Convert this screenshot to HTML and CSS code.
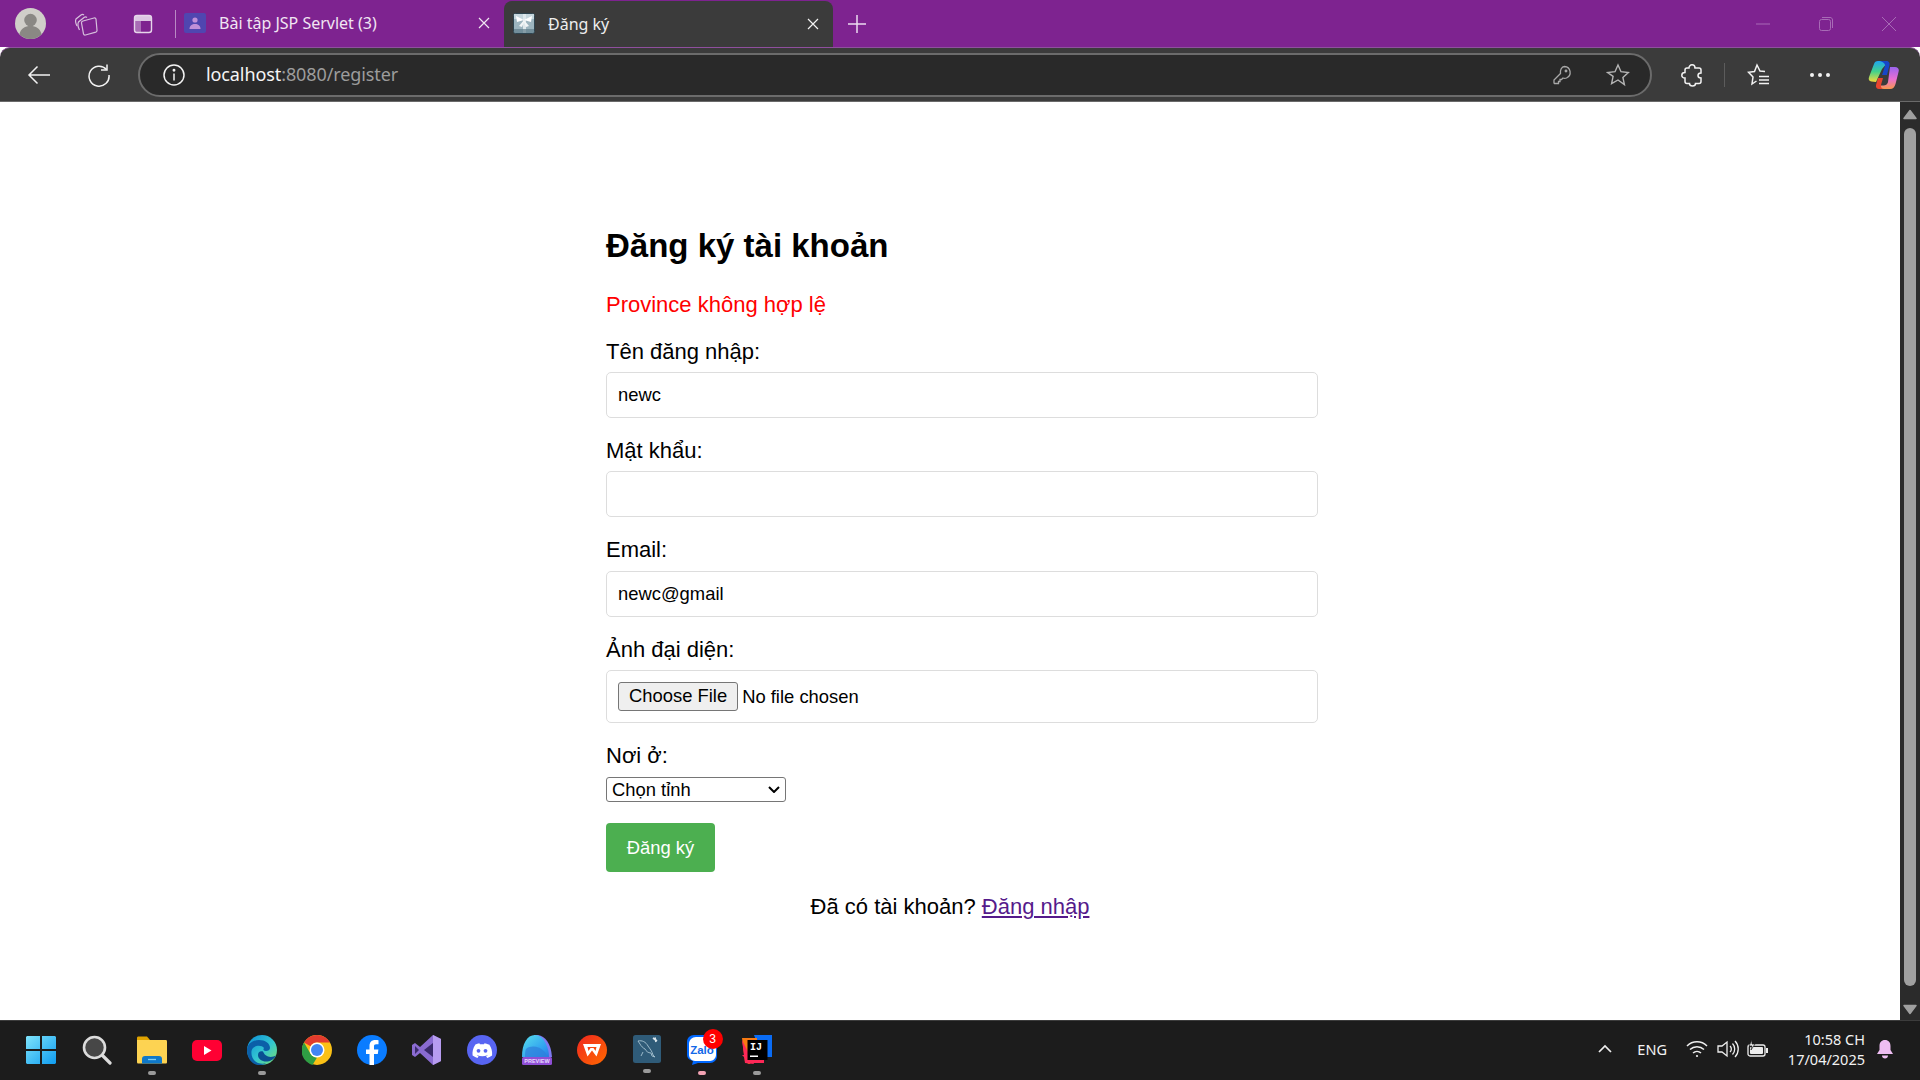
FILE: index.html
```html
<!DOCTYPE html>
<html lang="vi">

<head>
    <meta charset="UTF-8">
    <meta name="viewport" content="width=device-width, initial-scale=1.0">
    <title>Đăng ký</title>
    <link rel="stylesheet" href="styles.css">
</head>

<body>
    <!-- tab strip -->
    <div class="tab-strip">
        <span class="strip-btn avatar-btn">
            <svg width="31" height="31" viewBox="0 0 32 32"><circle cx="16" cy="16" r="16" fill="#d0cec9"/><circle cx="16" cy="12.500" r="6.500" fill="#8a8884"/><path d="M4.500 27c1.500-6 6-8.500 11.500-8.500S26 21 27.500 27A15.500 15.500 0 0 1 16 32 15.500 15.500 0 0 1 4.500 27z" fill="#8a8884"/></svg>
        </span>
        <span class="strip-btn collections-btn">
            <svg width="24" height="24" viewBox="0 0 24 24" fill="none" stroke="#d6bfdc" stroke-width="1.200"><path d="M3 14c-1.500-3-2-5-1-7l5-4c1-.7 2-.7 3 0"/><path d="M5.500 18C4 15 3.500 12 4.500 10L10 5.500c1-.7 2-.7 3 0"/><path d="M9 9l11-3c1-.2 1.800.2 2 1.200l1 11c.1 1-.4 1.600-1.200 1.900L11.500 23c-1 .2-1.800-.3-2-1.200L7.500 11c-.1-1 .5-1.700 1.500-2z"/></svg>
        </span>
        <span class="strip-btn vtabs-btn">
            <svg width="22" height="22" viewBox="0 0 22 22"><path d="M3 3h16v5H3z" fill="#dcc6e3"/><path d="M3 8h6v11H3z" fill="#dcc6e3" opacity=".45"/><rect x="2.500" y="2.500" width="17" height="17" rx="2.500" fill="none" stroke="#e6d5ea" stroke-width="1.400"/></svg>
        </span>
        <span class="strip-sep"></span>
        <div class="tab">
            <svg class="tab-icon" width="22" height="20" viewBox="0 0 22 20"><rect width="22" height="20" rx="2" fill="#5046b0"/><circle cx="11" cy="7" r="2.600" fill="#c08fd8"/><path d="M5.500 16c0-3.500 2.500-5 5.500-5s5.500 1.500 5.500 5z" fill="#c08fd8"/></svg>
            <span class="tab-title">Bài tập JSP Servlet (3)</span>
            <svg class="tab-close" width="12" height="12" viewBox="0 0 12 12"><path d="M1 1l10 10M11 1L1 11" stroke="#f0e6f2" stroke-width="1.200"/></svg>
        </div>
        <div class="tab tab-active">
            <svg class="tab-icon" width="22" height="21" viewBox="0 0 22 21"><rect x=".5" y=".5" width="21" height="20" rx="2" fill="#9db5bf" stroke="#2f4550"/><path d="M1 1h20v5H1z" fill="#c6d6dc"/><path d="M10 1h3v19h-3z" fill="#dfe8eb"/><path d="M11 7L3 3l1 6zM11 7l8-4-1 6z" fill="#fff"/><path d="M11 7l-5 6 3 1 2-5 2 5 3-1z" fill="#f3f6f7"/><path d="M1 16h20v4H1z" fill="#5f7d8a" opacity=".7"/></svg>
            <span class="tab-title">Đăng ký</span>
            <svg class="tab-close" width="12" height="12" viewBox="0 0 12 12"><path d="M1 1l10 10M11 1L1 11" stroke="#f2f2f2" stroke-width="1.200"/></svg>
        </div>
        <span class="new-tab">
            <svg width="20" height="20" viewBox="0 0 20 20"><path d="M10 1v18M1 10h18" stroke="#ecdcef" stroke-width="1.500"/></svg>
        </span>
        <div class="win-controls">
            <svg width="16" height="16" viewBox="0 0 16 16"><path d="M1 8h14" stroke="#a86bb6" stroke-width="1"/></svg>
            <svg width="16" height="16" viewBox="0 0 16 16" fill="none" stroke="#a86bb6"><rect x="1.500" y="3.500" width="11" height="11" rx="2"/><path d="M4 1.500h8c1.500 0 2.500 1 2.500 2.500v8"/></svg>
            <svg width="16" height="16" viewBox="0 0 16 16"><path d="M1 1l14 14M15 1L1 15" stroke="#a86bb6" stroke-width="1"/></svg>
        </div>
    </div>

    <!-- toolbar -->
    <div class="toolbar">
        <span class="tool-btn back-btn">
            <svg width="24" height="24" viewBox="0 0 24 24" fill="none" stroke="#f2f2f2" stroke-width="1.500"><path d="M23 12H2.500M10.500 3.500L2 12l8.500 8.500"/></svg>
        </span>
        <span class="tool-btn reload-btn">
            <svg width="24" height="24" viewBox="0 0 24 24" fill="none" stroke="#f2f2f2" stroke-width="1.500"><path d="M19.500 6.500A10 10 0 1 0 22 12"/><path d="M20 1.500v5.500h-6"/></svg>
        </span>
        <div class="address-bar">
            <svg class="info-icon" width="24" height="24" viewBox="0 0 24 24" fill="none" stroke="#f2f2f2" stroke-width="1.500"><circle cx="12" cy="12" r="10"/><path d="M12 10.500v7"/><circle cx="12" cy="7.300" r=".7" fill="#f2f2f2"/></svg>
            <span class="url"><span class="url-host">localhost</span>:8080/register</span>
            <svg class="key-icon" width="22" height="22" viewBox="0 0 22 22" fill="none" stroke="#a9a9a9" stroke-width="1.300"><path d="M13.500 2.500a6 6 0 0 1 2 11.500c-1.500.5-2.500.4-3.500 0l-1.500 1.500H9v2H7.500V19.500H3.500L3 19v-3l6.500-6.500c-.5-3.500 1-7 4-7z"/><circle cx="15" cy="7" r=".8" fill="#a9a9a9"/></svg>
            <svg class="star-icon" width="24" height="24" viewBox="0 0 24 24" fill="none" stroke="#b5b5b5" stroke-width="1.400"><path d="M12 2l3 6.700 7.300.8-5.400 4.900 1.500 7.200L12 17l-6.400 3.600 1.500-7.200L1.700 9.500 9 8.700z"/></svg>
        </div>
        <span class="tool-btn ext-btn">
            <svg width="24" height="24" viewBox="0 0 24 24" fill="none" stroke="#f2f2f2" stroke-width="1.500"><path d="M9 5c0-2 1.300-3.200 3-3.200S15 3 15 5h4c1 0 2 1 2 2v3c-2 0-3 1-3 2.500S19 15 21 15v3.500c0 1-1 2-2 2h-3.500c0 1.500-1.500 2.500-3 2.500s-3-1-3-2.500H7c-1 0-2-1-2-2V15c-2 0-3.200-1.200-3.200-2.800S3 9.500 5 9.500V7c0-1 1-2 2-2z"/></svg>
        </span>
        <span class="tool-sep"></span>
        <span class="tool-btn fav-btn">
            <svg width="24" height="24" viewBox="0 0 24 24" fill="none" stroke="#f2f2f2" stroke-width="1.500"><path d="M18 8.500L13 8 10 2 7.500 8.500l-6 .8L6 14l-1 7 4.500-3"/><path d="M12 13.500h10M12 17h10M12 20.500h10" stroke-width="1.700"/></svg>
        </span>
        <span class="tool-btn more-btn">
            <span class="more-dot"></span><span class="more-dot"></span><span class="more-dot"></span>
        </span>
        <span class="tool-btn copilot-btn">
            <svg width="31" height="28" viewBox="0 0 31 28">
                <defs>
                    <linearGradient id="cop1" x1="0" y1="0" x2="0" y2="1"><stop offset="0" stop-color="#1fa5f2"/><stop offset=".5" stop-color="#43d18b"/><stop offset="1" stop-color="#f7d93a"/></linearGradient>
                    <linearGradient id="cop2" x1="0" y1="0" x2="0" y2="1"><stop offset="0" stop-color="#9a64ee"/><stop offset=".55" stop-color="#ea6fd2"/><stop offset="1" stop-color="#f8984e"/></linearGradient>
                </defs>
                <path d="M14 8l6-7c-1-.8-2-1-3-1h-7C8 0 6.500 1 6 3L1 16c-.8 2.500 0 4 2.500 4.500L8 21z" fill="url(#cop1)"/>
                <path d="M12 0h6c2.500 0 4 1.500 3.500 4L19 14h-5l3-9c.5-2-1.500-4-5-5z" fill="#1846c8"/>
                <path d="M10 17h5l-2 7c-.4 1.500 1 3 3.500 4H11c-2 0-3.500-1.500-3-4z" fill="#e8442f"/>
                <path d="M22 6h5c3 0 4.500 2 3.500 5l-3 12c-.8 3-2.500 5-5.500 5h-6c-2 0-3.500-1.500-3-3.500 5 .5 6.500-1.500 7-3.500z" fill="url(#cop2)"/>
            </svg>
        </span>
    </div>

    <!-- page -->
    <div class="viewport">
        <main class="page">
            <div class="register-box">
                <h2 class="register-title">Đăng ký tài khoản</h2>
                <p class="error-msg">Province không hợp lệ</p>
                <form class="register-form">
                    <label class="form-label">Tên đăng nhập:</label>
                    <input class="form-input" type="text" value="newc">
                    <label class="form-label">Mật khẩu:</label>
                    <input class="form-input" type="password">
                    <label class="form-label">Email:</label>
                    <input class="form-input" type="text" value="newc@gmail">
                    <label class="form-label">Ảnh đại diện:</label>
                    <input class="form-input form-file" type="file">
                    <label class="form-label">Nơi ở:</label>
                    <select class="form-select">
                        <option>Chọn tỉnh</option>
                    </select>
                    <button class="submit-btn" type="button">Đăng ký</button>
                </form>
                <p class="login-line">Đã có tài khoản? <a href="#" class="login-link">Đăng nhập</a></p>
            </div>
        </main>
        <div class="scrollbar">
            <svg class="scroll-arrow" width="14" height="11" viewBox="0 0 14 11"><path d="M7 1.500L13 9.500H1z" fill="#a0a0a0" stroke="#a0a0a0" stroke-width="1.500" stroke-linejoin="round"/></svg>
            <span class="scroll-thumb"></span>
            <svg class="scroll-arrow" width="14" height="11" viewBox="0 0 14 11"><path d="M7 9.500L13 1.500H1z" fill="#a0a0a0" stroke="#a0a0a0" stroke-width="1.500" stroke-linejoin="round"/></svg>
        </div>
    </div>

    <!-- taskbar -->
    <div class="taskbar">
        <div class="task-icons">
            <div class="task-item win-item">
                <svg width="30" height="30" viewBox="0 0 30 30">
                    <defs><linearGradient id="win" x1="0" y1="0" x2="1" y2="1"><stop offset="0" stop-color="#7fe4fb"/><stop offset="1" stop-color="#0f9cf0"/></linearGradient></defs>
                    <path d="M1 1h13v13H0V2zM16 1h13l1 1v12H16zM0 16h14v13H1l-1-1zM16 16h14v12l-1 1H16z" fill="url(#win)"/>
                </svg>
            </div>
            <div class="task-item">
                <svg width="30" height="30" viewBox="0 0 30 30"><circle cx="12.500" cy="12.500" r="10.500" fill="#474747" stroke="#dcdcdc" stroke-width="2.600"/><path d="M20.500 20.500l7.500 7.500" stroke="#dcdcdc" stroke-width="3.200" stroke-linecap="round"/></svg>
            </div>
            <div class="task-item has-dot">
                <svg width="30" height="30" viewBox="0 0 30 30"><path d="M0 3c0-1 .5-1.500 1.500-1.500H10L13 5H0z" fill="#e0a300"/><path d="M0 5h28.500c1 0 1.500.5 1.500 1.500V27c0 1-.5 1.500-1.500 1.500h-27C.5 28.500 0 28 0 27z" fill="#fdd352"/><path d="M5 24c0-2 1-3 3-3h14c2 0 3 1 3 3v4.500H5z" fill="#0f78c9"/><path d="M11 24.500h8" stroke="#7fd0f5" stroke-width="1.300"/></svg>
                <span class="task-dot"></span>
            </div>
            <div class="task-item">
                <svg width="30" height="30" viewBox="0 0 30 30"><rect x="0" y="5" width="30" height="21" rx="5" fill="#ff0033"/><path d="M12 11l7.500 4.500L12 20z" fill="#fff"/></svg>
            </div>
            <div class="task-item has-dot">
                <svg width="30" height="30" viewBox="0 0 30 30">
                    <defs>
                        <linearGradient id="edge1" x1="0" y1="0" x2="1" y2="1"><stop offset="0" stop-color="#0c8ed8"/><stop offset=".55" stop-color="#33c6d0"/><stop offset="1" stop-color="#7ee26a"/></linearGradient>
                    </defs>
                    <circle cx="15" cy="15" r="15" fill="url(#edge1)"/>
                    <path d="M0 15C0 9 6 5 12 5c6 0 11 3 11 8 0 2-2 3-4 3-3 0-3-2-2-3-2-3-8-3-11 0-3 3-2 12 5 15 3 1 6 1 8 0-2 2-5 2-7 2C5 30 0 23 0 15z" fill="#0b5fa8"/>
                    <path d="M11 20c0 4 4 6.500 8 6.500 4 0 8-2 10-6-2 1-5 2-8 1-3-1-4-3-5-5-3-1-5 1-5 3.500z" fill="#0a4f92"/>
                </svg>
                <span class="task-dot"></span>
            </div>
            <div class="task-item">
                <svg width="30" height="30" viewBox="0 0 30 30"><circle cx="15" cy="15" r="15" fill="#fbc116"/><path d="M15 0a15 15 0 0 1 13 7.500H15A7.500 7.500 0 0 0 8.500 11.200L2 7.500A15 15 0 0 1 15 0z" fill="#e33b2e"/><path d="M2 7.500l6.500 11.300A7.500 7.500 0 0 0 15 22.500L10.500 30A15 15 0 0 1 2 7.500z" fill="#2f9e44"/><circle cx="15" cy="15" r="7.500" fill="#fff"/><circle cx="15" cy="15" r="6" fill="#4285f4"/></svg>
            </div>
            <div class="task-item">
                <svg width="30" height="30" viewBox="0 0 30 30"><circle cx="15" cy="15" r="15" fill="#0a7cff"/><path d="M12.500 30V19H9v-4.500h3.500V11c0-4 2.300-6 5.700-6 1.600 0 3 .1 3.300.2v4h-2.300c-1.800 0-2.200.9-2.200 2.100v3.200h4.400l-.6 4.500h-3.800v11z" fill="#fff"/></svg>
            </div>
            <div class="task-item">
                <svg width="30" height="30" viewBox="0 0 30 30"><path d="M21 0l8 4v22l-8 4-13-12-5 4-3-2V10l3-2 5 4z" fill="#8a6bd1"/><path d="M21 8v14l-9-7z" fill="#3a2a6b"/><path d="M3 11v8l4-4z" fill="#3a2a6b"/><path d="M21 0l8 4v22l-8 4z" fill="#b79cf0"/></svg>
            </div>
            <div class="task-item">
                <svg width="30" height="30" viewBox="0 0 30 30"><circle cx="15" cy="15" r="15" fill="#5865f2"/><path d="M21.500 9.500c-1.300-.6-2.600-1-4-1.200l-.5 1c-1.400-.2-2.800-.2-4.100 0l-.5-1c-1.400.2-2.700.6-4 1.200-2.500 3.700-3.200 7.400-2.800 11 1.700 1.200 3.300 2 4.900 2.500l1.100-1.700-1.700-.8.4-.3c3.200 1.500 6.900 1.500 10.100 0l.4.300-1.700.8 1.100 1.700c1.600-.5 3.200-1.300 4.900-2.500.4-4.200-.7-7.900-2.900-11z" fill="#fff"/><circle cx="11.500" cy="15.800" r="1.900" fill="#5865f2"/><circle cx="18.500" cy="15.800" r="1.900" fill="#5865f2"/></svg>
            </div>
            <div class="task-item">
                <svg width="30" height="30" viewBox="0 0 30 30">
                    <defs>
                        <linearGradient id="prev" x1="0" y1="0" x2="1" y2="1"><stop offset="0" stop-color="#58e0ec"/><stop offset=".7" stop-color="#2f9ef0"/><stop offset="1" stop-color="#2c78e0"/></linearGradient>
                    </defs>
                    <path d="M12 0h4c7 1 13 8 14 22H10z" fill="#7f7bf2"/>
                    <path d="M0 22C0 9 5 0 13 0c5 0 9 4 11 9 2 4 3 8 3 13z" fill="url(#prev)"/>
                    <path d="M4 14c5-4 13-3 19 3 1 2 2 3 3 5H3c0-3 0-6 1-8z" fill="#2f80dc" opacity=".75"/>
                    <rect x="0" y="22" width="30" height="8" rx="1.500" fill="#8f4fd6"/>
                    <text x="15" y="28.400" class="preview-text">PREVIEW</text>
                </svg>
            </div>
            <div class="task-item">
                <svg width="30" height="30" viewBox="0 0 30 30">
                    <defs><linearGradient id="wps" x1="0" y1="0" x2="1" y2="1"><stop offset="0" stop-color="#f0261f"/><stop offset="1" stop-color="#ff6a00"/></linearGradient></defs>
                    <circle cx="15" cy="15" r="15" fill="url(#wps)"/>
                    <path d="M6 9h18l-4.500 12.500L15 15.500l-4.500 6zM10.500 12l1 4 2-3h3l2 3 1-4z" fill="#fff" fill-rule="evenodd"/>
                </svg>
            </div>
            <div class="task-item has-dot">
                <svg width="28" height="28" viewBox="0 0 28 28"><rect width="28" height="28" rx="2.500" fill="#2f5b78"/><path d="M5 6c4-1 8 1 10 5 2 3 4 5 5 9l2 2-3-1-1-3c-3 0-5-2-6-4-2-1-4-3-5-5z" fill="none" stroke="#a8c4d2" stroke-width=".9"/><path d="M20 3l4 3M22 2.500l1 4.500" stroke="#dce7ec" stroke-width="1.600"/><path d="M8 21l2-4" stroke="#a8c4d2" stroke-width=".9"/></svg>
                <span class="task-dot"></span>
            </div>
            <div class="task-item has-dot">
                <div class="zalo-wrap">
                    <svg width="30" height="30" viewBox="0 0 30 30"><path d="M7 0h16c4 0 7 3 7 7v14c0 4-3 7-7 7H11l-6 2 1-4c-4-1-6-3-6-6V7c0-4 3-7 7-7z" fill="#0068ff"/><path d="M9 2h14c3 0 6 3 6 6v12c0 3-3 6-6 6H8c-3 0-6-3-6-6V9c0-4 3-7 7-7z" fill="#fff"/><text x="15" y="19" class="zalo-text">Zalo</text></svg>
                    <span class="zalo-badge">3</span>
                </div>
                <span class="task-dot dot-pink"></span>
            </div>
            <div class="task-item has-dot">
                <svg width="30" height="30" viewBox="0 0 30 30"><path d="M12 0h18v22H20z" fill="#0a6cf5"/><path d="M0 3h15v22l-8 4-4-2z" fill="#f97a12"/><path d="M0 20l14 0 8 0 0 8H8z" fill="#fe2857"/><path d="M3 28L0 5l12 24z" fill="#fe2857"/><rect x="5.500" y="5" width="20" height="20" fill="#000"/><text x="8" y="15" class="ij-text">IJ</text><rect x="8" y="20.500" width="8" height="1.500" fill="#fff"/></svg>
                <span class="task-dot"></span>
            </div>
        </div>
        <div class="tray">
            <svg class="tray-chevron" width="14" height="14" viewBox="0 0 14 14" fill="none" stroke="#eee" stroke-width="1.700"><path d="M1 10l6-6 6 6"/></svg>
            <span class="tray-lang">ENG</span>
            <svg class="tray-wifi" width="22" height="18" viewBox="0 0 22 18" fill="none" stroke="#eee" stroke-width="1.500"><path d="M1 6a14 14 0 0 1 20 0M4 9.500a10 10 0 0 1 14 0M7 13a6 6 0 0 1 8 0"/><circle cx="11" cy="16" r="1.100" fill="#eee" stroke="none"/></svg>
            <svg class="tray-vol" width="22" height="18" viewBox="0 0 22 18" fill="none" stroke="#eee" stroke-width="1.300"><path d="M1 6h4l5-4v14l-5-4H1z"/><path d="M13 6a4 4 0 0 1 0 6M15.500 3.500a8 8 0 0 1 0 11M18 1a11.500 11.500 0 0 1 0 16"/></svg>
            <svg class="tray-batt" width="22" height="18" viewBox="0 0 22 18"><rect x="1" y="5" width="17" height="11" rx="2" fill="none" stroke="#eee" stroke-width="1.300"/><rect x="3" y="7" width="13" height="7" rx="1" fill="#eee"/><rect x="19" y="8" width="2" height="5" fill="#eee"/><path d="M5 0L2 6h3l-1 4 4-6H5z" fill="#eee" stroke="#1c1c1c" stroke-width=".7"/></svg>
            <div class="clock">
                <span>10:58 CH</span>
                <span>17/04/2025</span>
            </div>
            <svg class="tray-bell" width="18" height="20" viewBox="0 0 18 20"><path d="M9 1c3.500 0 5.500 2.500 5.500 6v4l2.500 4H1l2.500-4V7C3.500 3.500 5.500 1 9 1z" fill="#eebdf2"/><path d="M6 16.500h6c0 1.800-1.300 3-3 3s-3-1.200-3-3z" fill="#eebdf2"/></svg>
        </div>
    </div>
</body>

</html>
```

FILE: styles.css
```css
* {
    box-sizing: border-box;
    margin: 0;
    padding: 0;
}

html,
body {
    width: 1920px;
    height: 1080px;
    overflow: hidden;
}

body {
    display: flex;
    flex-direction: column;
    font-family: "Liberation Sans", Arial, sans-serif;
    background: #fff;
}

/* tab strip */
.tab-strip {
    height: 47px;
    display: flex;
    align-items: flex-end;
    background: #7e2390;
    color: #f1e6f3;
    font-family: "Noto Sans", sans-serif;
    font-size: 16px;
}

.strip-btn {
    height: 47px;
    display: flex;
    align-items: center;
}

.avatar-btn {
    margin-left: 15px;
}

.collections-btn {
    margin-left: 28px;
}

.vtabs-btn {
    margin-left: 34px;
}

.strip-sep {
    width: 1px;
    height: 28px;
    margin: 0 0 9px 21px;
    background: #b98ac4;
}

.tab {
    width: 332px;
    height: 47px;
    display: flex;
    align-items: center;
    padding: 0 18px 2px 8px;
}

.tab-icon {
    flex: none;
}

.tab-title {
    flex: 1;
    margin-left: 13px;
    white-space: nowrap;
}

.tab-active {
    width: 329px;
    height: 46px;
    padding: 0 14px 1px 9px;
    background: #3b3b3b;
    border-radius: 8px 8px 0 0;
    color: #eee;
    margin-left: -4px;
}

.new-tab {
    height: 47px;
    display: flex;
    align-items: center;
    margin-left: 14px;
}

.win-controls {
    height: 47px;
    margin-left: auto;
    display: flex;
    align-items: center;
    gap: 47px;
    padding-right: 23px;
}

/* toolbar */
.toolbar {
    height: 55px;
    display: flex;
    align-items: center;
    background: #3b3b3b;
    border-top: 1px solid #8f4f9e;
    border-bottom: 1px solid #6a6a6a;
    border-radius: 10px 10px 0 0;
    color: #f2f2f2;
}

.tool-btn {
    display: flex;
    align-items: center;
    justify-content: center;
    flex: none;
}

.back-btn {
    margin-left: 27px;
}

.reload-btn {
    margin-left: 36px;
}

.address-bar {
    width: 1514px;
    height: 44px;
    margin-left: 27px;
    display: flex;
    align-items: center;
    background: #292929;
    border: 2px solid #6b6b6b;
    border-radius: 22px;
    font-family: "Noto Sans", sans-serif;
    font-size: 18px;
}

.info-icon {
    margin-left: 22px;
}

.url {
    margin: 0 0 2px 20px;
    color: #9c9c9c;
    letter-spacing: -0.1px;
}

.url-host {
    color: #f5f5f5;
}

.key-icon {
    margin-left: auto;
}

.star-icon {
    margin: 0 20px 0 33px;
}

.ext-btn {
    margin-left: 28px;
}

.tool-sep {
    width: 1px;
    height: 24px;
    margin: 0 22px 0 20px;
    background: #5c5c5c;
}

.more-btn {
    margin-left: 39px;
    gap: 4px;
}

.more-dot {
    width: 4px;
    height: 4px;
    border-radius: 50%;
    background: #f2f2f2;
}

.copilot-btn {
    margin-left: 38px;
}

/* page */
.viewport {
    flex: 1;
    min-height: 0;
    display: flex;
}

.page {
    flex: 1;
    display: flex;
    justify-content: center;
    background: #fff;
    color: #000;
}

.register-box {
    width: 688px;
    padding-top: 125px;
}

.register-title {
    font-size: 33px;
    line-height: 38px;
    font-weight: bold;
}

.error-msg {
    margin-top: 27px;
    font-size: 22px;
    line-height: 25px;
    color: #f00;
}

.register-form {
    margin-top: 22px;
}

.form-label {
    display: block;
    font-size: 22px;
    line-height: 25.200px;
    margin-bottom: 8px;
}

.form-input {
    display: block;
    box-sizing: content-box;
    width: 100%;
    height: 22px;
    padding: 11px;
    margin-bottom: 20px;
    border: 1px solid #ddd;
    border-radius: 5px;
    font-family: "Liberation Sans", Arial, sans-serif;
    font-size: 18.400px;
    color: #000;
    outline: none;
}

.form-file {
    height: 29px;
}

.form-file::file-selector-button {
    height: 29px;
    padding: 0 10px;
    margin-right: 4px;
    border: 1px solid #767676;
    border-radius: 3px;
    background: #efefef;
    color: #000;
    font: inherit;
}

.form-select {
    display: block;
    width: 180px;
    height: 25px;
    margin-top: 9px;
    padding-left: 5px;
    appearance: none;
    border: 1px solid #767676;
    border-radius: 3px;
    background: #fff url("data:image/svg+xml,%3Csvg xmlns='http://www.w3.org/2000/svg' width='12' height='7'%3E%3Cpath d='M1 1l5 5 5-5' fill='none' stroke='%23000' stroke-width='2'/%3E%3C/svg%3E") no-repeat right 5px center;
    font-family: "Liberation Sans", Arial, sans-serif;
    font-size: 18.400px;
    color: #000;
}

.submit-btn {
    display: block;
    width: 109px;
    height: 49px;
    margin-top: 21px;
    border: none;
    border-radius: 4px;
    background: #4caf50;
    color: #fff;
    font-family: "Liberation Sans", Arial, sans-serif;
    font-size: 18.400px;
}

.login-line {
    margin-top: 22px;
    text-align: center;
    font-size: 22px;
    line-height: 25px;
}

.login-link {
    color: #551a8b;
}

/* scrollbar */
.scrollbar {
    width: 20px;
    display: flex;
    flex-direction: column;
    align-items: center;
    background: #2b2b2b;
    padding: 7px 0 5px;
}

.scroll-arrow {
    flex: none;
}

.scroll-thumb {
    flex: 1;
    width: 12px;
    margin: 8px 0 18px;
    border-radius: 6px;
    background: #a0a0a0;
}

/* taskbar */
.taskbar {
    height: 60px;
    display: flex;
    align-items: center;
    background: #1c1c1c;
    border-top: 1px solid #3c3c3c;
}

.task-icons {
    display: flex;
    padding-left: 14px;
}

.task-item {
    width: 55px;
    height: 59px;
    display: flex;
    flex-direction: column;
    align-items: center;
    padding-top: 14px;
}

.win-item {
    padding-right: 2px;
}

.has-dot svg {
    flex: none;
}

.task-dot {
    width: 8px;
    height: 4px;
    margin-top: 6px;
    border-radius: 2px;
    background: #9a9a9a;
}

.dot-pink {
    background: #f4a3b4;
}

.zalo-wrap {
    position: relative;
    width: 30px;
    height: 30px;
}

.zalo-badge {
    position: absolute;
    top: -6px;
    right: -6px;
    width: 20px;
    height: 20px;
    border-radius: 50%;
    background: #f00;
    color: #fff;
    font-size: 12px;
    line-height: 20px;
    text-align: center;
}

.zalo-text {
    font-family: "Liberation Sans", sans-serif;
    font-size: 11.500px;
    font-weight: bold;
    fill: #1368e8;
    text-anchor: middle;
}

.preview-text {
    font-family: "Liberation Sans", sans-serif;
    font-size: 5.500px;
    font-weight: bold;
    fill: #e8dcff;
    text-anchor: middle;
}

.ij-text {
    font-family: "Liberation Mono", monospace;
    font-size: 10px;
    font-weight: bold;
    fill: #fff;
}

.tray {
    margin-left: auto;
    display: flex;
    align-items: center;
    padding-bottom: 3px;
    color: #f2f2f2;
    font-family: "Noto Sans", sans-serif;
    font-size: 14.500px;
}

.tray-lang {
    margin: 0 19px 0 25px;
}

.tray-vol {
    margin-left: 9px;
}

.tray-batt {
    margin-left: 8px;
}

.clock {
    width: 96px;
    display: flex;
    flex-direction: column;
    align-items: flex-end;
    line-height: 20px;
}

.tray-bell {
    margin: 0 26px 0 11px;
}
```
